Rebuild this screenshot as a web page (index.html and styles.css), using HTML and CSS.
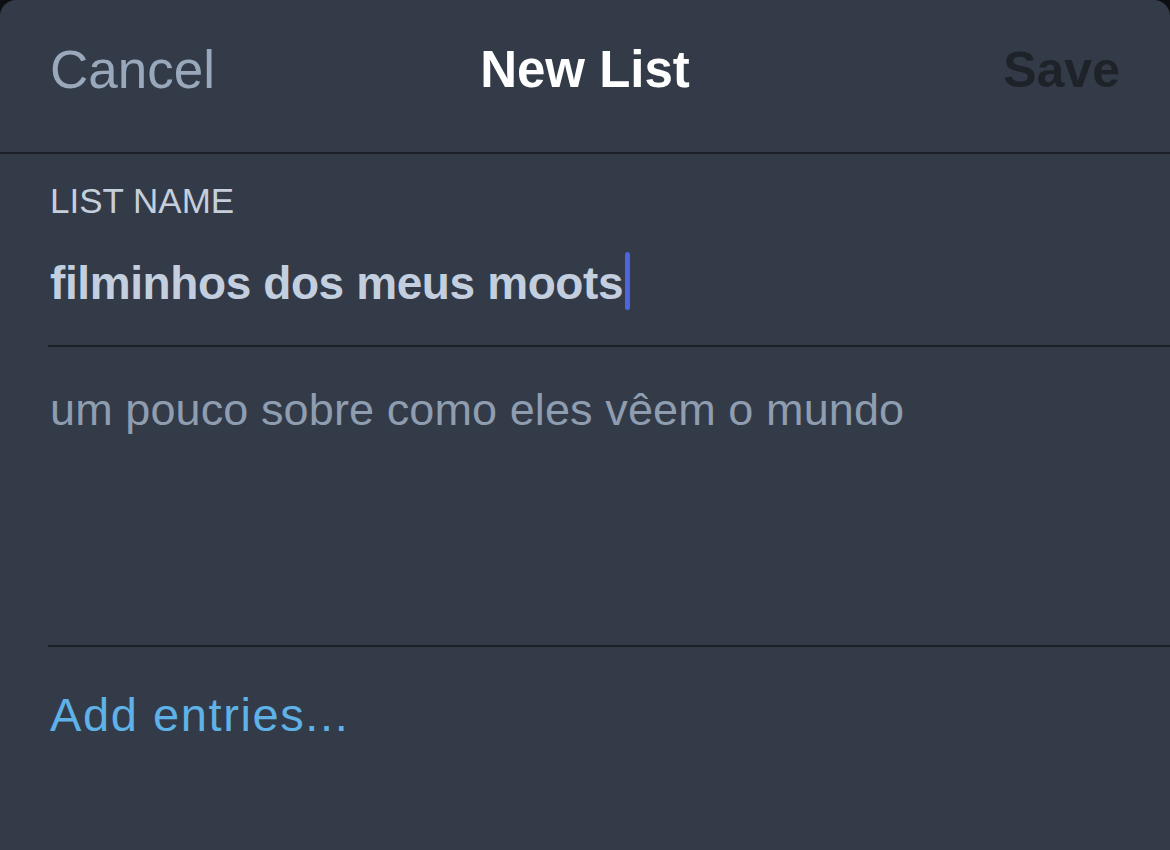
FILE: index.html
```html
<!DOCTYPE html>
<html lang="pt">
<head>
<meta charset="utf-8">
<title>New List</title>
<link rel="stylesheet" href="styles.css">
</head>
<body>
<div class="sheet">
  <header class="topbar">
    <span class="cancel">Cancel</span>
    <span class="title">New List</span>
    <span class="save">Save</span>
  </header>
  <section class="name-field">
    <div class="label">LIST NAME</div>
    <div class="name">filminhos dos meus moots<span class="caret"></span></div>
  </section>
  <section class="desc-field">
    <div class="placeholder">um pouco sobre como eles vêem o mundo</div>
  </section>
  <section class="entries">
    <div class="add">Add entries...</div>
  </section>
</div>
</body>
</html>
```
FILE: styles.css
```css
html, body {
  margin: 0;
  padding: 0;
  background: #0d0f12;
}
body {
  font-family: "Liberation Sans", Arial, sans-serif;
}
.sheet {
  width: 1170px;
  height: 850px;
  background: #333b48;
  border-radius: 16px 16px 0 0;
  overflow: hidden;
}
.topbar {
  box-sizing: border-box;
  height: 154px;
  padding: 40px 50px 0;
  border-bottom: 2px solid #1b2029;
  display: flex;
  justify-content: space-between;
  align-items: flex-start;
  line-height: 60px;
}
.cancel {
  font-size: 53px;
  color: #9aa8bc;
  width: 220px;
}
.title {
  font-size: 51px;
  font-weight: bold;
  color: #ffffff;
}
.save {
  font-size: 50px;
  font-weight: bold;
  color: #1e2229;
  width: 220px;
  text-align: right;
}
.name-field {
  margin-left: 48px;
  padding: 27px 0 32px 2px;
  border-bottom: 2px solid #1b2029;
}
.label {
  font-size: 35px;
  line-height: 40px;
  color: #c5cfdb;
}
.name {
  margin-top: 31px;
  font-size: 46px;
  line-height: 60px;
  font-weight: bold;
  letter-spacing: -0.4px;
  color: #c3cfdf;
}
.caret {
  display: inline-block;
  width: 5px;
  height: 58px;
  margin-left: 2px;
  border-radius: 3px;
  background: #4b64e0;
  vertical-align: -11px;
}
.desc-field {
  box-sizing: border-box;
  height: 300px;
  margin-left: 48px;
  padding: 35px 0 0 2px;
  border-bottom: 2px solid #1b2029;
}
.placeholder {
  font-size: 45px;
  line-height: 56px;
  letter-spacing: 0.1px;
  color: #8f9db1;
}
.entries {
  margin-left: 48px;
  padding: 40px 0 0 2px;
}
.add {
  font-size: 47px;
  line-height: 56px;
  letter-spacing: 1.6px;
  color: #5fb2e7;
}
```
